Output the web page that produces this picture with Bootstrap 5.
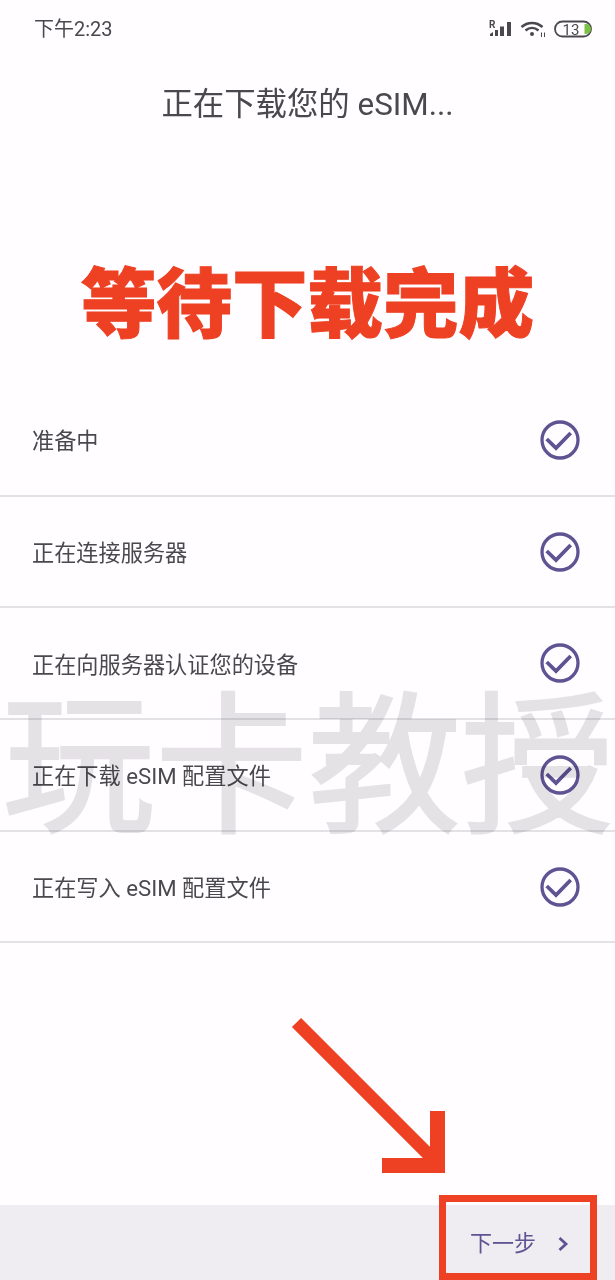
<!DOCTYPE html>
<html lang="zh-CN">
<head>
  <meta charset="UTF-8">
  <meta name="viewport" content="width=device-width, initial-scale=1.0">
  <title>正在下载您的 eSIM</title>
  <link href="https://cdn.jsdelivr.net/npm/bootstrap@5.3.0/dist/css/bootstrap.min.css" rel="stylesheet">
  <style>
    body {
      font-family: Roboto, "Noto Sans CJK SC", sans-serif;
      background: #fffdff;
      color: #4a484c;
      width: 615px;
      height: 1280px;
      overflow: hidden;
    }
    .phone { height: 1280px; }
    .status-row { height: 58px; padding: 0 23px 0 34px; font-size: 20px; }
    .status-icons { gap: 8px; }
    .screen-title { height: 94px; font-size: 31.400px; margin: 0; font-weight: 400; color: #4a484c; }
    .wait-banner {
      height: 232px;
      font-size: 75.500px;
      font-weight: 900;
      line-height: 1;
      color: #ee4023;
      -webkit-text-stroke: 1px #ee4023;
      padding-top: 76px;
    }
    .step-list { margin-top: 1px; border-radius: 0; }
    .step-item {
      height: 111.700px;
      padding: 0 35px 0 32px;
      font-size: 22.200px;
      color: #4a484c;
      border-width: 0 0 2px;
      border-color: #e2e1e4;
      border-radius: 0;
      background: transparent;
    }
    .step-item svg { width: 40px; height: 40px; }
    .footer-bar { height: 75px; background: #efedf1; }
    .next-box {
      width: 158px;
      height: 85px;
      margin: -10px 18px 0 0;
      border: 7px solid #ee4023;
      color: #5f5393;
      font-size: 22px;
      padding: 12px 0 0 24px;
      position: relative;
    }
    .next-box svg { width: 12px; height: 16px; margin-left: 21px; }
    .watermark {
      position: absolute;
      left: 2px;
      top: 670px;
      font-size: 153px;
      font-weight: 400;
      line-height: 1.3;
      color: #e5e4e6;
      -webkit-text-stroke: 2px #e5e4e6;
      mix-blend-mode: multiply;
      white-space: nowrap;
      pointer-events: none;
    }
    .hint-arrow { position: absolute; left: 285px; top: 1010px; width: 170px; height: 170px; }
  </style>
</head>
<body>
  <div class="phone d-flex flex-column position-relative">
    <!-- Status bar -->
    <div class="status-row d-flex justify-content-between align-items-center">
      <span>下午2:23</span>
      <div class="status-icons d-flex align-items-center">
        <svg width="25" height="18" viewBox="0 0 25 18">
          <text x="2" y="7.500" font-size="10" font-weight="700" font-family="Roboto" fill="#4a484c">R</text>
          <path d="M3 16v-2l3-2v4zM8 16v-6h3v6zM13 16V6.500h4V16zM20 16V2h4v14z" fill="#4a484c"/>
        </svg>
        <svg width="26" height="18" viewBox="0 0 26 18" fill="none" stroke="#4a484c" stroke-width="2.500">
          <path d="M1.500 7C7.500 1.500 16.500 1.500 22.500 7"/>
          <path d="M5.500 10.500C9.500 7 14.500 7 18.500 10.500"/>
          <circle cx="12" cy="14" r="2" fill="#4a484c" stroke="none"/>
          <path d="M21.500 12.500v4.500M24.500 12.500v4.500" stroke-width="1"/>
        </svg>
        <svg width="38" height="18" viewBox="0 0 38 18">
          <rect x="1" y="1.500" width="36" height="15" rx="7.500" fill="none" stroke="#4a484c" stroke-width="1.800"/>
          <path d="M30.500 4h1.500a5 5 0 0 1 0 10h-1.500z" fill="#7cc242"/>
          <text x="17" y="14.500" text-anchor="middle" font-size="15" font-family="Roboto" fill="#4a484c">13</text>
        </svg>
      </div>
    </div>

    <h1 class="screen-title d-flex justify-content-center align-items-center">正在下载您的 eSIM...</h1>

    <div class="wait-banner d-flex justify-content-center align-items-center">等待下载完成</div>

    <!-- Steps -->
    <ul class="list-group step-list">
      <li class="list-group-item step-item d-flex justify-content-between align-items-center"><span class="pt-1">准备中</span>
        <svg viewBox="0 0 40 40"><use href="#check"/></svg></li>
      <li class="list-group-item step-item d-flex justify-content-between align-items-center"><span class="pt-1">正在连接服务器</span>
        <svg viewBox="0 0 40 40"><use href="#check"/></svg></li>
      <li class="list-group-item step-item d-flex justify-content-between align-items-center"><span class="pt-1">正在向服务器认证您的设备</span>
        <svg viewBox="0 0 40 40"><use href="#check"/></svg></li>
      <li class="list-group-item step-item d-flex justify-content-between align-items-center"><span class="pt-1">正在下载 eSIM 配置文件</span>
        <svg viewBox="0 0 40 40"><use href="#check"/></svg></li>
      <li class="list-group-item step-item d-flex justify-content-between align-items-center"><span class="pt-1">正在写入 eSIM 配置文件</span>
        <svg viewBox="0 0 40 40"><use href="#check"/></svg></li>
    </ul>

    <!-- Bottom bar -->
    <div class="footer-bar mt-auto d-flex justify-content-end">
      <div class="next-box d-flex align-items-center">下一步
        <svg viewBox="0 0 12 16" fill="none" stroke="#5f5393" stroke-width="2.800"><path d="M2.500 2l6.500 6-6.500 6"/></svg>
      </div>
    </div>

    <div class="watermark">玩卡教授</div>

    <svg class="hint-arrow" viewBox="0 0 170 170" fill="none" stroke="#ee4023">
      <path d="M11.500 12.500L152 153" stroke-width="13"/>
      <path d="M97 155.500H152.500V101" stroke-width="15"/>
    </svg>
  </div>

  <svg width="0" height="0" class="position-absolute">
    <symbol id="check" viewBox="0 0 40 40">
      <circle cx="20" cy="20" r="18" fill="none" stroke="#5f5393" stroke-width="3.300"/>
      <path d="M6.700 19l9.300 9L30.700 13" fill="none" stroke="#5f5393" stroke-width="3.800"/>
    </symbol>
  </svg>

  <script src="https://cdn.jsdelivr.net/npm/bootstrap@5.3.0/dist/js/bootstrap.bundle.min.js"></script>
</body>
</html>
